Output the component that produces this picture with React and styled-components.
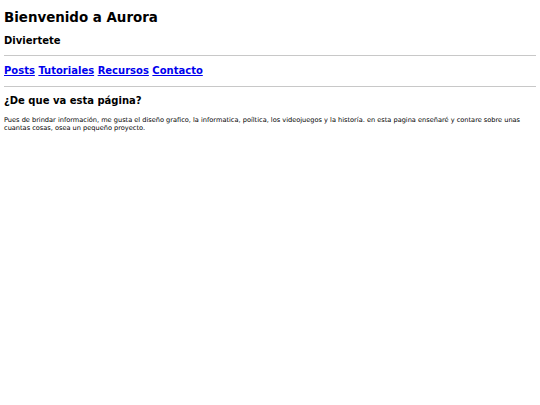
import React from 'react'
import styled, { createGlobalStyle } from 'styled-components'

const Global = createGlobalStyle`
  html, body {
    margin: 0;
    background: #ffffff;
  }
  body {
    padding: 4px;
    font-family: "DejaVu Sans", Verdana, sans-serif;
    color: #000000;
  }
`

const Header = styled.header`
  padding-top: 6px;
`

const Title = styled.h1`
  margin: 0;
  font-size: 13.4px;
  line-height: 16px;
  font-weight: bold;
`

const Subtitle = styled.h2`
  margin: 9px 0 0;
  font-size: 10px;
  line-height: 12px;
  font-weight: bold;
`

const Rule = styled.hr`
  margin: ${p => p.top}px 0 0;
  border: 0;
  border-top: 1px solid #c8c8c8;
  height: 0;
`

const Nav = styled.nav`
  margin-top: 9px;
  font-size: 10px;
  line-height: 12px;
  font-weight: bold;
`

const NavLink = styled.a`
  color: #0000ee;
  text-decoration: underline;
`

const Section = styled.section`
  margin-top: 8px;
`

const SectionTitle = styled.h2`
  margin: 0;
  font-size: 10px;
  line-height: 12px;
  font-weight: bold;
`

const Text = styled.p`
  margin: 9px 0 0;
  font-size: 6.6px;
  line-height: 8px;
`

export default function App() {
  return (
    <>
      <Global />
      <Header>
        <Title>Bienvenido a Aurora</Title>
        <Subtitle>Diviertete</Subtitle>
      </Header>
      <Rule top={8} />
      <Nav>
        <NavLink href="#">Posts</NavLink> <NavLink href="#">Tutoriales</NavLink>{' '}
        <NavLink href="#">Recursos</NavLink> <NavLink href="#">Contacto</NavLink>
      </Nav>
      <Rule top={9} />
      <Section>
        <SectionTitle>¿De que va esta página?</SectionTitle>
        <Text>
          Pues de brindar información, me gusta el diseño grafico, la informatica, poíltica, los videojuegos y la historía. en esta pagina enseñaré y contare sobre unas cuantas cosas, osea un pequeño proyecto.
        </Text>
      </Section>
    </>
  )
}
